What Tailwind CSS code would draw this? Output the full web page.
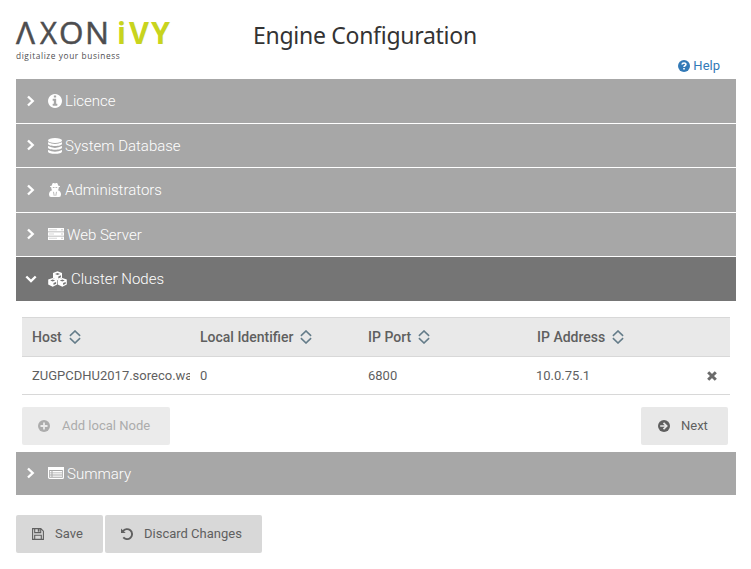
<!DOCTYPE html>
<html lang="en">
<head>
<meta charset="utf-8">
<title>Engine Configuration</title>
<script src="https://cdn.jsdelivr.net/npm/@tailwindcss/browser@4"></script>
</head>
<body class="bg-white font-['Roboto',sans-serif] text-[13px] text-[#5f5f5f] w-[751px] h-[569px] overflow-hidden">
<svg class="hidden">
  <symbol id="right" viewBox="0 0 10 12"><path d="M2 1.500 6.700 6 2 10.500" fill="none" stroke="currentColor" stroke-width="2.400"/></symbol>
  <symbol id="sort" viewBox="0 0 12 14"><path d="M.9 5.800 6 1l5.100 4.800M.9 8.200 6 13l5.100-4.800" fill="none" stroke="#647c89" stroke-width="1.600"/></symbol>
</svg>
<div class="pl-4 pr-[15px]">
  <header class="flex h-[79px]">
    <div class="w-[237px] pt-[13px]">
      <svg class="block w-[156px] h-[38px] overflow-visible" viewBox="0 0 156 38">
        <g fill="#4d4d4f" stroke="#4d4d4f" stroke-width=".5" font-family="Open Sans" font-size="31">
          <text x="0" y="31" textLength="19" lengthAdjust="spacingAndGlyphs">Λ</text>
          <text x="24" y="31" textLength="17" lengthAdjust="spacingAndGlyphs">X</text>
          <text x="43" y="31" textLength="24.500" lengthAdjust="spacingAndGlyphs">O</text>
          <text x="69" y="31" textLength="24" lengthAdjust="spacingAndGlyphs">N</text>
        </g>
        <g fill="#c8d41e" font-family="Open Sans" font-size="31" font-weight="700">
          <text x="101" y="31" textLength="9" lengthAdjust="spacingAndGlyphs">i</text>
          <text x="113" y="31" textLength="20" lengthAdjust="spacingAndGlyphs">V</text>
          <text x="135" y="31" textLength="19" lengthAdjust="spacingAndGlyphs">Y</text>
        </g>
      </svg>
      <div class="font-['Open_Sans',sans-serif] text-[8.300px] leading-[10px] tracking-[0.600px] text-[#4d4d4f]">digitalize your business</div>
    </div>
    <h1 class="pt-[18px] font-['Noto_Sans',sans-serif] text-[23px] leading-[34px] tracking-[-0.280px] text-[#333] whitespace-nowrap">Engine Configuration</h1>
    <a class="ml-auto mr-[16px] mt-[56px] flex h-[20px] items-center gap-[3px] text-[#337ab7]">
      <svg class="w-3 h-3" viewBox="0 0 12 12"><circle cx="6" cy="6" r="6" fill="currentColor"/><path d="M4 4.500C4.200 2.400 8 2.500 7.900 4.500 7.800 5.800 6 5.700 6 7" fill="none" stroke="#fff" stroke-width="1.600"/><path d="M5.200 8h1.600v1.500H5.200z" fill="#fff"/></svg>
      <span>Help</span>
    </a>
  </header>

  <main>
    <section class="flex h-[44px] mb-px items-center bg-[#a7a7a7] text-white text-[15px] font-light">
      <svg class="ml-[10px] mr-[12px] w-[10px] h-3"><use href="#right"/></svg>
      <svg class="w-[14px] h-[14px] mr-[3px]" viewBox="128 128 1536 1536"><path fill="currentColor" d="M1152 1376v-160q0-14-9-23t-23-9h-96v-512q0-14-9-23t-23-9h-320q-14 0-23 9t-9 23v160q0 14 9 23t23 9h96v320h-96q-14 0-23 9t-9 23v160q0 14 9 23t23 9h448q14 0 23-9t9-23zm-128-896v-160q0-14-9-23t-23-9h-192q-14 0-23 9t-9 23v160q0 14 9 23t23 9h192q14 0 23-9t9-23zm640 416q0 209-103 385.500t-279.500 279.500-385.500 103-385.500-103-279.500-279.500-103-385.500 103-385.500 279.500-279.500 385.500-103 385.500 103 279.500 279.500 103 385.500z"/></svg>
      <span>Licence</span>
    </section>
    <section class="flex h-[43px] mb-px items-center bg-[#a7a7a7] text-white text-[15px] font-light">
      <svg class="ml-[10px] mr-[12px] w-[10px] h-3 -mt-px"><use href="#right"/></svg>
      <svg class="w-[14px] h-4 mr-[3px]" viewBox="0 0 14 16" fill="currentColor"><ellipse cx="7" cy="2.500" rx="7" ry="2.500"/><path d="M0 4.300q7 3.600 14 0v1.500c0 3-14 3-14 0zM0 8.100q7 3.600 14 0v1.500c0 3-14 3-14 0zM0 11.900q7 3.600 14 0v1.500c0 3.200-14 3.200-14 0z"/></svg>
      <span class="pt-px">System Database</span>
    </section>
    <section class="flex h-[44px] mb-px items-center bg-[#a7a7a7] text-white text-[15px] font-light">
      <svg class="ml-[10px] mr-[12px] w-[10px] h-3"><use href="#right"/></svg>
      <svg class="w-[14px] h-[14px] mr-[3px] -mt-px" viewBox="0 0 14 14" fill="currentColor"><path d="M3.900 2.500C4.300-.6 5.400-.3 7 .4 8.600-.3 9.700-.6 10.100 2.500q2 .4 2 .9t-1.400.8q.2 2-.9 3.100Q13 8.100 13 11.500q0 2.500-2 2.500H3q-2 0-2-2.500Q1 8.100 4.200 7.300q-1.100-1.100-.9-3.100-1.400-.3-1.400-.8t2-.9z"/><path d="M4.800 4.500h1.700M7.500 4.500h1.700M5.500 8.800l.7 4M8.500 8.800l-.7 4" stroke="#a7a7a7" stroke-width=".8"/></svg>
      <span>Administrators</span>
    </section>
    <section class="flex h-[43px] mb-px items-center bg-[#a7a7a7] text-white text-[15px] font-light">
      <svg class="ml-[10px] mr-[12px] w-[10px] h-3 -mt-px"><use href="#right"/></svg>
      <svg class="w-4 h-3 mr-[3px] -mt-px" viewBox="0 0 16 12"><path fill="currentColor" d="M0 0h16v3.500H0zM0 4.250h16v3.500H0zM0 8.500h16V12H0z"/><path d="M1 1.750h8M1 6h5M1 10.250h8" stroke="#c4c4c4" stroke-width=".7"/><path d="M13.500 1.750h1M13.500 6h1M13.500 10.250h1" stroke="#999"/></svg>
      <span class="pt-px">Web Server</span>
    </section>
    <section class="flex h-[44px] items-center bg-[#757575] text-white text-[15px] font-light">
      <svg class="ml-[9px] mr-[11px] w-3 h-[10px]" viewBox="0 0 12 10"><path d="M1.300 2.500 6 7l4.700-4.500" fill="none" stroke="currentColor" stroke-width="2.400"/></svg>
      <svg class="w-[19px] h-4 mr-[4px] -mt-px" viewBox="0 0 19 16"><g id="cube"><path fill="currentColor" d="M9.500.3 14 2v4.900L9.500 9.200 5 6.900V2z"/><path d="M7 3l2.500-1L12 3 9.500 4zM10.300 7.400V5.500L12.900 4.300v1.900z" fill="#757575"/></g><use href="#cube" x="-4.800" y="6.600"/><use href="#cube" x="4.800" y="6.600"/></svg>
      <span>Cluster Nodes</span>
    </section>

    <div class="h-[151px] pl-[6px] pr-[6px] pt-4">
      <table class="w-[708px] table-fixed border-collapse">
        <colgroup><col class="w-[168px]"><col class="w-[168px]"><col class="w-[168px]"><col class="w-[168px]"><col></colgroup>
        <thead>
          <tr class="h-[39px] border-y border-[#d8d8d8] bg-[#e9e9e9] text-left text-[14px] whitespace-nowrap">
            <th class="py-0 pl-[10px] font-medium"><div class="flex items-center gap-[7px]">Host<svg class="w-3 h-[14px]"><use href="#sort"/></svg></div></th>
            <th class="py-0 pl-[10px] font-medium"><div class="flex items-center gap-[7px]">Local Identifier<svg class="w-3 h-[14px]"><use href="#sort"/></svg></div></th>
            <th class="py-0 pl-[10px] font-medium"><div class="flex items-center gap-[7px]">IP Port<svg class="w-3 h-[14px]"><use href="#sort"/></svg></div></th>
            <th class="py-0 pl-[11px] font-medium"><div class="flex items-center gap-[7px]">IP Address<svg class="w-3 h-[14px]"><use href="#sort"/></svg></div></th>
            <th></th>
          </tr>
        </thead>
        <tbody>
          <tr class="h-[38px] border-b border-[#d8d8d8] whitespace-nowrap">
            <td class="py-0 pl-[10px]"><div class="w-[158px] overflow-hidden">ZUGPCDHU2017.soreco.wa</div></td>
            <td class="py-0 pl-[10px]">0</td>
            <td class="py-0 pl-[10px]">6800</td>
            <td class="py-0 pl-[10px]">10.0.75.1</td>
            <td class="p-0"><svg class="ml-[13px] mt-px w-[10px] h-[10px]" viewBox="0 0 10 10"><path d="M1.200 1.200l7.600 7.600M8.800 1.200 1.200 8.800" stroke="#6b6b6b" stroke-width="3"/></svg></td>
          </tr>
        </tbody>
      </table>
      <div class="mt-3 mr-[2px] flex justify-between">
        <button class="flex h-[38px] w-[148px] items-center rounded-[2px] bg-[#ebebeb] pl-4 text-[#acacac]"><svg class="mr-3 w-3 h-3 -mt-px" viewBox="0 0 12 12"><circle cx="6" cy="6" r="6" fill="currentColor"/><path d="M6 2.500v7M2.500 6h7" stroke="#ebebeb" stroke-width="1.800"/></svg><span>Add local Node</span></button>
        <button class="flex h-[38px] w-[87px] items-center rounded-[2px] bg-[#e8e8e8] pl-[17px]"><svg class="mr-[11px] w-3 h-3 -mt-px" viewBox="0 0 12 12"><circle cx="6" cy="6" r="6" fill="currentColor"/><path d="M2.200 6h6M5.500 2.800 8.700 6 5.500 9.200" fill="none" stroke="#e8e8e8" stroke-width="1.700"/></svg><span>Next</span></button>
      </div>
    </div>

    <section class="flex h-[43px] items-center bg-[#a7a7a7] text-white text-[15px] font-light">
      <svg class="ml-[10px] mr-[12px] w-[10px] h-3 -mt-px"><use href="#right"/></svg>
      <svg class="w-4 h-3 mr-[3px] -mt-px" viewBox="0 0 16 12"><rect x=".6" y=".6" width="14.800" height="10.800" rx="1" fill="none" stroke="currentColor" stroke-width="1.200"/><path fill="currentColor" d="M0 0h16v3H0zM2 4h1.500v1.400H2zM2 6.200h1.500v1.400H2zM2 8.400h1.500v1.400H2zM4.500 4H14v1.400H4.500zM4.500 6.200H14v1.400H4.500zM4.500 8.400H14v1.400H4.500z"/></svg>
      <span class="pt-px">Summary</span>
    </section>
  </main>

  <footer class="mt-5 flex gap-[2px]">
    <button class="flex h-[38px] w-[87px] items-center rounded-[2px] bg-[#d8d8d8] pl-4"><svg class="mr-[11px] w-3 h-3 -mt-px" viewBox="0 0 12 12"><path d="M.6.6h8.200l2.600 2.600v8.200H.6zM2.700.6v4h6v-4M2.700 11.400V7.200h6.600v4.200" fill="none" stroke="currentColor" stroke-width="1.100"/><path d="M5.800 1h1.700v2.700H5.800z" fill="currentColor"/></svg><span>Save</span></button>
    <button class="flex h-[38px] w-[157px] items-center rounded-[2px] bg-[#d8d8d8] pl-4"><svg class="mr-[11px] w-3 h-3 -mt-px" viewBox="0 0 12 12"><path d="M2 3.200A5 5 0 1 1 2.300 9.400" fill="none" stroke="currentColor" stroke-width="1.900"/><path d="M0 .5 4.700 5H0z" fill="currentColor"/></svg><span>Discard Changes</span></button>
  </footer>
</div>
</body>
</html>
